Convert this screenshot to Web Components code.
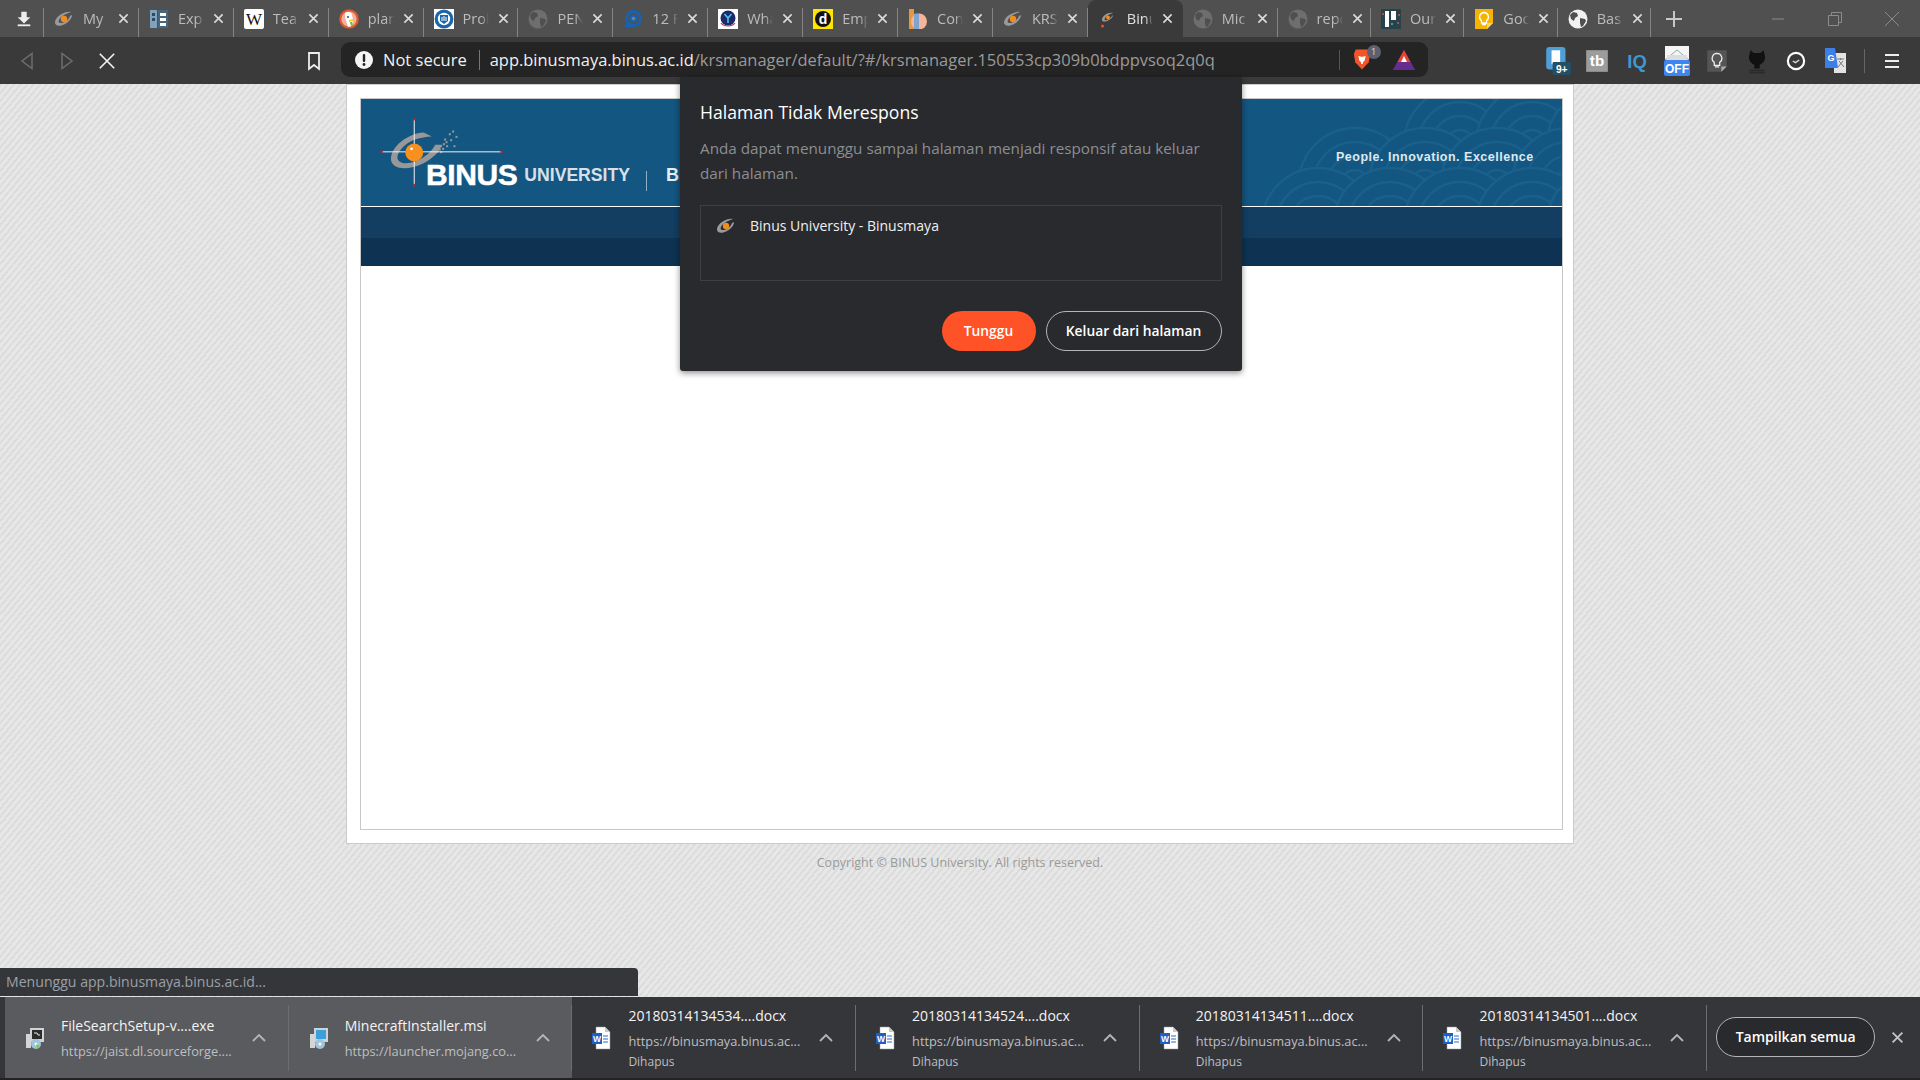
<!DOCTYPE html>
<html lang="id">
<head>
<meta charset="utf-8">
<title>Binus University - Binusmaya</title>
<style>
  html, body { margin: 0; padding: 0; height: 100%; overflow: hidden; }
  body { font-family: "Open Sans", "Liberation Sans", sans-serif; background: #3a3a3a; }
</style>
</head>
<body>
<browser-window>
  <tab-strip>
    <browser-tab><app-icon slot="icon" name="binus"></app-icon>My</browser-tab>
    <browser-tab><app-icon slot="icon" name="columns"></app-icon>Exp</browser-tab>
    <browser-tab><app-icon slot="icon" name="wiki"></app-icon>Tea</browser-tab>
    <browser-tab><app-icon slot="icon" name="duck"></app-icon>plan</browser-tab>
    <browser-tab><app-icon slot="icon" name="shield"></app-icon>Prol</browser-tab>
    <browser-tab><app-icon slot="icon" name="globedim"></app-icon>PEN</browser-tab>
    <browser-tab><app-icon slot="icon" name="bubble"></app-icon>12 F</browser-tab>
    <browser-tab><app-icon slot="icon" name="crest"></app-icon>Wha</browser-tab>
    <browser-tab><app-icon slot="icon" name="dict"></app-icon>Emp</browser-tab>
    <browser-tab><app-icon slot="icon" name="peach"></app-icon>Con</browser-tab>
    <browser-tab><app-icon slot="icon" name="binus"></app-icon>KRS</browser-tab>
    <browser-tab active><app-icon slot="icon" name="loading"></app-icon>Binu</browser-tab>
    <browser-tab><app-icon slot="icon" name="globedim"></app-icon>Mic</browser-tab>
    <browser-tab><app-icon slot="icon" name="globedim"></app-icon>repo</browser-tab>
    <browser-tab><app-icon slot="icon" name="mosaic"></app-icon>Our</browser-tab>
    <browser-tab><app-icon slot="icon" name="keep"></app-icon>Goo</browser-tab>
    <browser-tab><app-icon slot="icon" name="globe"></app-icon>Bas</browser-tab>
  </tab-strip>
  <nav-bar></nav-bar>
  <binus-page></binus-page>
  <download-bar>
    <download-item hover icon="exe">
      <span slot="name">FileSearchSetup-v....exe</span>
      <span slot="url">https://jaist.dl.sourceforge....</span>
    </download-item>
    <download-item hover icon="msi">
      <span slot="name">MinecraftInstaller.msi</span>
      <span slot="url">https://launcher.mojang.co...</span>
    </download-item>
    <download-item icon="word">
      <span slot="name">20180314134534....docx</span>
      <span slot="url">https://binusmaya.binus.ac...</span>
      <span slot="status">Dihapus</span>
    </download-item>
    <download-item icon="word">
      <span slot="name">20180314134524....docx</span>
      <span slot="url">https://binusmaya.binus.ac...</span>
      <span slot="status">Dihapus</span>
    </download-item>
    <download-item icon="word">
      <span slot="name">20180314134511....docx</span>
      <span slot="url">https://binusmaya.binus.ac...</span>
      <span slot="status">Dihapus</span>
    </download-item>
    <download-item icon="word">
      <span slot="name">20180314134501....docx</span>
      <span slot="url">https://binusmaya.binus.ac...</span>
      <span slot="status">Dihapus</span>
    </download-item>
  </download-bar>
  <hang-dialog></hang-dialog>
</browser-window>

<script>
// all the little pictures live here, 20x20 unless the viewBox says otherwise
const GLOBE = (bg, fg) => `<svg viewBox="0 0 20 20"><circle cx="10" cy="10" r="9.5" fill="${bg}"/><path d="M5 3l4 1 1 3-3 2-1 3-3-2-1-4zM12 9l5 1 1 2-3 5-2 1-1-4z" fill="${fg}"/></svg>`;
const ICONS = {
  binus: `<svg viewBox="0 0 20 20"><path d="M17 3C11 2 2 7 1 13c-.6 4 5 5 10 2 4-2 7-6 7-9l-2 1c-1 3-4 6-8 7-3 .5-4-1-3-3 1-3 6-6 12-8z" fill="#9a9a9a"/><circle cx="10" cy="10" r="3.2" fill="#f28c1c"/></svg>`,
  columns: `<svg viewBox="0 0 20 20"><rect x="1" y="1" width="7" height="18" fill="#7fa3bd"/><rect x="9" y="1" width="10" height="18" fill="#46657f"/><rect x="11" y="4" width="6" height="3" fill="#fff"/><rect x="11" y="9" width="6" height="3" fill="#fff"/><rect x="11" y="14" width="6" height="3" fill="#fff"/><rect x="3" y="4" width="3" height="3" fill="#2e4a60"/><rect x="3" y="9" width="3" height="3" fill="#2e4a60"/></svg>`,
  wiki: `<svg viewBox="0 0 20 20"><rect width="20" height="20" rx="2" fill="#fff"/><text x="10" y="15.5" text-anchor="middle" font-family="Liberation Serif" font-size="17" fill="#111">W</text></svg>`,
  duck: `<svg viewBox="0 0 20 20"><circle cx="10" cy="10" r="9.8" fill="#de5833"/><circle cx="10" cy="10" r="7.6" fill="#f4b09a"/><path d="M6 4c3-2 7-1 7 2 1 3 1 8 0 11l-4 1C8 13 5 8 6 4z" fill="#fff"/><circle cx="9" cy="8" r="1" fill="#2d4f8e"/><path d="M10 11l4-1v2l-4 1z" fill="#fdd20a"/><path d="M11 13h2l1 3-2 1z" fill="#65bc46"/></svg>`,
  shield: `<svg viewBox="0 0 20 20"><rect width="20" height="20" fill="#fff"/><circle cx="10" cy="10" r="9.4" fill="#1b66a8"/><circle cx="10" cy="10" r="6.2" fill="#fff"/><path d="M6 6h8v6l-4 3-4-3z" fill="#1b66a8"/><path d="M8 8v4M10 7v5M12 8v4" stroke="#fff" stroke-width="1"/></svg>`,
  globedim: GLOBE('#6e6e6e', '#4f4f4f'),
  globe: GLOBE('#f2f2f2', '#505050'),
  bubble: `<svg viewBox="0 0 20 20"><path d="M10.500 1a8.500 8.500 0 0 1 0 17H1l2.500-4A8.500 8.500 0 0 1 10.500 1z" fill="#1a62ad"/><circle cx="10.500" cy="9.500" r="5.500" fill="#505050"/><circle cx="10.500" cy="9.500" r="4" fill="#1a62ad"/><circle cx="10.500" cy="9.500" r="1.800" fill="#6f8296"/></svg>`,
  crest: `<svg viewBox="0 0 20 20"><rect width="20" height="20" fill="#fff"/><circle cx="10" cy="9" r="7.5" fill="#1b2a6b"/><path d="M6.500 5l3.500 4 3.500-4M10 9v5" stroke="#4cc3e8" stroke-width="1.600" fill="none"/><path d="M3 14c3 4 11 4 14 0" stroke="#b03050" stroke-width="1.200" fill="none"/></svg>`,
  dict: `<svg viewBox="0 0 20 20"><rect width="20" height="20" fill="#ffe600"/><circle cx="10" cy="10" r="8" fill="#111"/><text x="10" y="15" text-anchor="middle" font-family="Liberation Sans" font-weight="700" font-size="14" fill="#fff">d</text></svg>`,
  peach: `<svg viewBox="0 0 20 20"><path d="M1 0h5v20H1z" fill="#e8973a"/><circle cx="11" cy="12.500" r="8" fill="#f5b59a"/><path d="M6 4.800a8 8 0 0 1 5 0v15.200H6z" fill="#7da5cf"/></svg>`,
  loading: `<svg viewBox="0 0 20 20"><path d="M15 4C10 3 4 7 4 11c0 2 4 2 7 0 2-1 4-3 4-5l-1 1c-1 2-3 3-5 4-2 .5-3 0-2-2 1-2 4-4 8-5z" fill="#9a9a9a"/><circle cx="10" cy="8.500" r="2" fill="#f28c1c"/><circle cx="4.500" cy="17" r="1.500" fill="#f04e23"/></svg>`,
  mosaic: `<svg viewBox="0 0 20 20"><rect width="20" height="20" fill="#27424a"/><rect x="4" y="2" width="4" height="16" fill="#fff"/><rect x="10" y="2" width="5" height="9" fill="#fff"/><circle cx="2" cy="5" r="1" fill="#d9534f"/><circle cx="18" cy="6" r="1" fill="#d9534f"/><circle cx="17" cy="14" r="1" fill="#d9534f"/><circle cx="11" cy="15" r="1" fill="#5cb8a5"/></svg>`,
  keep: `<svg viewBox="0 0 20 20"><path d="M1 0h18v14l-6 6H1z" fill="#f4b400"/><path d="M13 20v-6h6z" fill="#f8d66c"/><path d="M10 3.500a4.500 4.500 0 0 0-2.500 8.200V14h5v-2.300A4.500 4.500 0 0 0 10 3.500zM8 15.500h4" stroke="#fff" stroke-width="1.300" fill="none"/></svg>`,
  word: `<svg viewBox="0 0 20 24"><path d="M4 1h9l5 5v17H4z" fill="#fff" stroke="#999" stroke-width=".5"/><path d="M13 1v5h5z" fill="#c8c8c8"/><path d="M11 10h5M11 13h5M11 16h5" stroke="#2b6cc4" stroke-width="1.200"/><rect x="0" y="7" width="10" height="11" fill="#1d5fc4"/><text x="5" y="15.500" text-anchor="middle" font-family="Liberation Sans" font-weight="700" font-size="8.500" fill="#fff">W</text></svg>`,
  exe: `<svg viewBox="0 0 20 24"><rect x="1" y="8" width="5" height="14" fill="#d5d5d5"/><rect x="5" y="2" width="14" height="14" fill="#cfd3d6"/><rect x="7" y="4" width="10" height="9" fill="#2c2c2c"/><path d="M9 7h3l1 2h2" stroke="#eee" fill="none"/><circle cx="11" cy="18" r="5" fill="#9fc4dc"/><circle cx="11" cy="18" r="1.500" fill="#fff"/><path d="M11 18l4 2-3 3z" fill="#8bc34a"/></svg>`,
  msi: `<svg viewBox="0 0 20 24"><rect x="1" y="8" width="5" height="14" fill="#d5d5d5"/><rect x="5" y="2" width="14" height="14" fill="#cfd3d6"/><rect x="7" y="4" width="10" height="9" fill="#3b9fdc"/><circle cx="11" cy="18" r="5" fill="#9fc4dc"/><circle cx="11" cy="18" r="1.500" fill="#fff"/></svg>`,
  back: `<svg viewBox="0 0 20 20"><path d="M15 2.500v15L5 10z" fill="none" stroke="#6e6e6e" stroke-width="1.500"/></svg>`,
  forward: `<svg viewBox="0 0 20 20"><path d="M5 2.500v15L15 10z" fill="none" stroke="#6e6e6e" stroke-width="1.500"/></svg>`,
  stop: `<svg viewBox="0 0 20 20"><path d="M2 2l16 16M18 2L2 18" stroke="#f4f4f4" stroke-width="1.800"/></svg>`,
  bookmark: `<svg viewBox="0 0 20 20"><path d="M5 2h10v16l-5-4-5 4z" fill="none" stroke="#eee" stroke-width="1.800"/></svg>`,
  warn: `<svg viewBox="0 0 20 20"><circle cx="10" cy="10" r="9" fill="#f4f4f4"/><rect x="8.800" y="4" width="2.400" height="8" rx="1" fill="#222"/><circle cx="10" cy="14.500" r="1.400" fill="#222"/></svg>`,
  brave: `<svg viewBox="0 0 20 24"><path d="M3 1h14l2 5-1.500 9L10 23 2.500 15 1 6z" fill="#f1562b"/><path d="M6 8l3 1h2l3-1-1 5-2 2v2H9v-2l-2-2z" fill="#fff"/></svg>`,
  bat: `<svg viewBox="0 0 24 22"><path d="M12 1l11 20H1z" fill="#662d91"/><path d="M12 1l6.500 12h-13z" fill="#e8452c"/><path d="M12 7l4 8H8z" fill="#fff"/><path d="M5.500 13L1 21h22l-4.500-8z" fill="#662d91"/></svg>`,
  pocket: `<svg viewBox="0 0 24 28"><rect x="1" y="1" width="18" height="21" rx="3" fill="#4f9ed8"/><path d="M6 4h8v13H6z" fill="#fff"/><rect x="7" y="15" width="17" height="12" rx="1" fill="#234f67"/><text x="15.500" y="25" text-anchor="middle" font-family="Liberation Sans" font-weight="700" font-size="9.500" fill="#fff">9+</text></svg>`,
  tb: `<svg viewBox="0 0 20 24"><rect y="2" width="20" height="20" fill="#9c9c9c"/><text x="10" y="17" text-anchor="middle" font-family="Liberation Sans" font-weight="700" font-size="14" fill="#fff">tb</text></svg>`,
  iq: `<svg viewBox="0 0 20 24"><text x="10" y="18" text-anchor="middle" font-family="Liberation Sans" font-weight="700" font-size="17" fill="#3f97cf">IQ</text></svg>`,
  off: `<svg viewBox="0 0 26 32"><rect x="1" y="1" width="24" height="14" fill="#f5f5f5"/><path d="M1 15l12-10 12 10" fill="none" stroke="#8aa" stroke-width="1"/><rect x="3" y="10" width="20" height="6" fill="#ddd"/><rect y="15" width="26" height="16" rx="2" fill="#3d85f0"/><text x="13" y="28" text-anchor="middle" font-family="Liberation Sans" font-weight="700" font-size="12" fill="#fff">OFF</text></svg>`,
  bulb: `<svg viewBox="0 0 20 24"><path d="M1 2h18v15l-5 5H1z" fill="#555"/><path d="M10 5a4.500 4.500 0 0 0-2.500 8.200V16h5v-2.800A4.500 4.500 0 0 0 10 5zM8 17.500h4" stroke="#eee" stroke-width="1.200" fill="none"/><path d="M14 22v-5h5z" fill="#aaa"/></svg>`,
  github: `<svg viewBox="0 0 20 24"><path d="M4 2l3 2.500h6L16 2l1.500 6c0 4.500-3 6.500-5 7.500V19h-5v-3.500c-2-1-5-3-5-7.500z" fill="#111"/><rect x="3" y="20" width="14" height="1.500" fill="#2a2a2a"/><rect x="3" y="22" width="14" height="1.500" fill="#2a2a2a"/></svg>`,
  clock: `<svg viewBox="0 0 20 24"><circle cx="10" cy="12" r="7.500" fill="none" stroke="#fff" stroke-width="2"/><path d="M7 12l2.500 1.500L13 11" fill="none" stroke="#ddd" stroke-width="1.200"/></svg>`,
  translate: `<svg viewBox="0 0 24 26"><path d="M10 5h12v20H10z" fill="#e3e3e3"/><path d="M13 11h7M16.500 10v2M14 19l5-6M15 13l5 6" stroke="#777" stroke-width="1"/><path d="M1 0h10l3 20H1z" fill="#3d7fe8"/><text x="7" y="13" text-anchor="middle" font-family="Liberation Sans" font-weight="700" font-size="9" fill="#fff">G</text></svg>`,
  menu: `<svg viewBox="0 0 20 20"><path d="M3 4h14M3 10h14M3 16h14" stroke="#eee" stroke-width="1.800"/></svg>`,
  down: `<svg viewBox="0 0 20 20"><path d="M7 2h6v6h4l-7 7-7-7h4z" fill="#eee"/><rect x="3" y="16" width="14" height="2" fill="#eee"/></svg>`,
  close: `<svg viewBox="0 0 12 12"><path d="M1.500 1.500l9 9M10.500 1.500l-9 9" stroke="currentColor" stroke-width="1.700"/></svg>`,
  chevron: `<svg viewBox="0 0 16 10"><path d="M2 8l6-6 6 6" fill="none" stroke="currentColor" stroke-width="1.800"/></svg>`,
};

class AppIcon extends HTMLElement {
  constructor() {
    super();
    this.attachShadow({ mode: "open" });
  }
  connectedCallback() {
    this.shadowRoot.innerHTML = `
      <style>
        :host { display: inline-flex; width: var(--size, 20px); height: var(--size-h, var(--size, 20px)); flex: none; }
        svg { width: 100%; height: 100%; display: block; }
      </style>
      ${ICONS[this.getAttribute("name")] || ""}`;
  }
}
customElements.define("app-icon", AppIcon);

class BrowserWindow extends HTMLElement {
  constructor() {
    super();
    this.attachShadow({ mode: "open" }).innerHTML = `
      <style>
        :host { display: flex; flex-direction: column; width: 1920px; height: 1080px; position: relative; overflow: hidden; }
      </style>
      <slot></slot>`;
  }
}
customElements.define("browser-window", BrowserWindow);

class TabStrip extends HTMLElement {
  constructor() {
    super();
    this.attachShadow({ mode: "open" }).innerHTML = `
      <style>
        :host { display: flex; height: 37px; background: #505050; flex: none; align-items: stretch; }
        .dl { width: 44px; padding-left: 3px; display: flex; align-items: center; justify-content: center; position: relative; box-sizing: border-box; }
        .dl::after { content: ""; position: absolute; right: 0; top: 8px; bottom: 0; width: 1px; background: #858585; }
        .plus { width: 46px; display: flex; align-items: center; justify-content: center; font-size: 0; }
        .plus svg { width: 16px; height: 16px; }
        .controls { margin-left: auto; display: flex; color: #8c8c8c; }
        .controls div { width: 57px; display: flex; align-items: center; justify-content: center; }
        .controls svg { width: 16px; height: 16px; }
      </style>
      <div class="dl"><app-icon name="down" style="--size:18px"></app-icon></div>
      <slot></slot>
      <div class="plus"><svg viewBox="0 0 16 16"><path d="M8 0v16M0 8h16" stroke="#c8c8c8" stroke-width="2"/></svg></div>
      <div class="controls">
        <div><svg viewBox="0 0 16 16"><path d="M2 8h12" stroke="currentColor"/></svg></div>
        <div><svg viewBox="0 0 16 16"><path d="M1.500 4.500h10v10h-10zM4.500 4V1.500h10v10H12" fill="none" stroke="currentColor"/></svg></div>
        <div><svg viewBox="0 0 16 16"><path d="M1 1l14 14M15 1L1 15" stroke="currentColor"/></svg></div>
      </div>`;
  }
}
customElements.define("tab-strip", TabStrip);

class BrowserTab extends HTMLElement {
  constructor() {
    super();
    this.attachShadow({ mode: "open" }).innerHTML = `
      <style>
        :host { display: flex; align-items: center; width: 94.9px; box-sizing: border-box; padding-left: 10px; position: relative; color: #bcbcbc; font-size: 14.5px; }
        :host(:nth-last-child(-n+4)) { width: 93.4px; }
        :host::after { content: ""; position: absolute; right: 0; top: 8px; bottom: 0; width: 1px; background: #858585; }
        :host([active]) { background: #3a3a3a; border-radius: 8px 8px 0 0; color: #e0e0e0; }
        :host([active])::after { display: none; }
        .title { margin-left: 9px; width: 26px; overflow: hidden; white-space: nowrap; -webkit-mask-image: linear-gradient(to right, #000 70%, transparent); mask-image: linear-gradient(to right, #000 70%, transparent); }
        .x { position: absolute; left: 74px; top: 13px; width: 11px; height: 11px; color: #dcdcdc; }
        .x svg { display: block; }
      </style>
      <slot name="icon"></slot>
      <div class="title"><slot></slot></div>
      <div class="x">${ICONS.close}</div>`;
  }
}
customElements.define("browser-tab", BrowserTab);

class NavBar extends HTMLElement {
  constructor() {
    super();
    const exts = [
      ["pocket", 26, 30], ["tb", 22, 26], ["iq", 22, 26], ["off", 26, 32],
      ["bulb", 22, 26], ["github", 22, 26], ["clock", 22, 26], ["translate", 24, 26],
    ].map(([n, w, h]) => `<div class="ext"><app-icon name="${n}" style="--size:${w}px;--size-h:${h}px"></app-icon></div>`).join("");
    this.attachShadow({ mode: "open" }).innerHTML = `
      <style>
        :host { display: flex; align-items: center; height: 47px; background: #3a3a3a; flex: none; padding-left: 7px; box-sizing: border-box; }
        .btn { width: 40px; display: flex; justify-content: center; }
        .mark { margin-left: 176px; width: 21px; display: flex; justify-content: center; margin-right: 17px; }
        .address { width: 1087px; height: 35px; background: #242424; border-radius: 9px; display: flex; align-items: center; box-sizing: border-box; padding-left: 13px; color: #f1f1f1; margin-top: -2px; white-space: nowrap; }
        .secure { font-size: 16.5px; margin-left: 9px; }
        .bar { width: 1px; height: 20px; background: #777; margin: 0 10px 0 12px; }
        .url { font-size: 16.47px; width: 849px; }
        .url span { color: #9a9a9a; }
        .bar2 { width: 1px; height: 20px; background: #555; }
        .shield { position: relative; margin-left: 13px; width: 30px; display: flex; }
        .badge { position: absolute; left: 14px; top: -3px; width: 14px; height: 14px; border-radius: 50%; background: #5c6070; color: #ddd; font-size: 9px; text-align: center; line-height: 14px; }
        .bat { margin-left: 9px; }
        .exts { margin-left: 111px; display: flex; }
        .ext { width: 39.9px; display: flex; justify-content: center; align-items: center; }
        .ext:first-child { width: 38px; }
        .sep { width: 1px; height: 24px; background: #666; margin-left: 8px; }
        .menu { margin-left: 17px; }
      </style>
      <div class="btn"><app-icon name="back" style="--size:20px"></app-icon></div>
      <div class="btn"><app-icon name="forward" style="--size:20px"></app-icon></div>
      <div class="btn"><app-icon name="stop" style="--size:18px"></app-icon></div>
      <div class="mark"><app-icon name="bookmark"></app-icon></div>
      <div class="address">
        <app-icon name="warn"></app-icon>
        <span class="secure">Not secure</span>
        <i class="bar"></i>
        <div class="url">app.binusmaya.binus.ac.id<span>/krsmanager/default/?#/krsmanager.150553cp309b0bdppvsoq2q0q</span></div>
        <i class="bar2"></i>
        <div class="shield"><app-icon name="brave" style="--size:18px;--size-h:23px"></app-icon><div class="badge">1</div></div>
        <app-icon class="bat" name="bat" style="--size:24px;--size-h:22px"></app-icon>
      </div>
      <div class="exts">${exts}</div>
      <i class="sep"></i>
      <app-icon class="menu" name="menu"></app-icon>`;
  }
}
customElements.define("nav-bar", NavBar);

class BinusBanner extends HTMLElement {
  constructor() {
    super();
    // rows of scallops, drawn from the top row down so each row covers the one before
    const rows = [[144, [1460, 1532, 1603]], [184, [1355, 1425, 1497, 1568]], [224, [1318, 1390, 1460, 1532, 1603]]];
    let scales = "";
    for (const [cy, xs] of rows) {
      for (const cx of xs) {
        scales += [56, 42, 28, 14].map((r) => `<circle cx="${cx - 361}" cy="${cy - 99}" r="${r}"/>`).join("");
      }
    }
    let bits = "";
    [[300,196],[308,190],[316,184],[296,206],[306,204],[318,196],[326,160],[336,152],[330,178],[346,168],[340,196],[312,176],[288,212],[300,214]].forEach(([x, y]) => {
      bits += `<rect x="${x}" y="${y}" width="6" height="6"/>`;
    });
    this.attachShadow({ mode: "open" }).innerHTML = `
      <style>
        :host { display: block; flex: none; }
        .top { height: 107px; background: #135681; position: relative; overflow: hidden; box-sizing: border-box; padding: 59px 0 0 65px; display: flex; align-items: baseline; color: #fff; font-family: "Liberation Sans", sans-serif; font-weight: 700; }
        .pattern { position: absolute; left: 0; top: 0; width: 1200px; height: 107px; fill: #135681; stroke: #19608b; stroke-width: 2.500; }
        .emblem { position: absolute; left: 16px; top: 14px; width: 133px; height: 77px; }
        .binus { font-size: 30px; line-height: 30px; position: relative; top: 2px; letter-spacing: -.4px; -webkit-text-stroke: .5px #fff; }
        .univ { font-size: 17.6px; margin-left: 7px; color: #d7e0e8; position: relative; top: -2px; }
        .rule { width: 1px; height: 20px; background: #8fb0c8; margin-left: 16px; align-self: center; position: relative; top: -1px; }
        .mark { font-size: 18px; margin-left: 19px; color: #e8eef2; position: relative; top: -2px; }
        .tag { position: absolute; left: 975px; top: 51px; font-size: 12.500px; letter-spacing: .5px; color: #dfe8ee; white-space: nowrap; }
        .line { height: 1px; background: #fff; box-shadow: 0 -1px 0 #6f9ab8; }
        .a { height: 31px; background: #133d61; }
        .b { height: 28px; background: #0e3352; }
      </style>
      <div class="top">
        <svg class="pattern" viewBox="0 0 1200 107">${scales}</svg>
        <svg class="emblem" viewBox="110 100 400 230">
          <path d="M275 170L250 158C205 160 150 200 152 240C155 268 200 275 250 250C275 238 300 215 305 195L285 195C270 225 225 255 190 250C165 245 165 225 190 200C210 180 240 172 275 170Z" fill="#989898"/>
          <g fill="#9a9a9a">${bits}</g>
          <path d="M222 118V316M124 216H485" stroke="#f2f2f2" stroke-width="3"/>
          <g fill="#c4202a"><circle cx="222" cy="118" r="4"/><circle cx="222" cy="316" r="4"/><circle cx="124" cy="216" r="4"/><circle cx="485" cy="216" r="4"/></g>
          <circle cx="222" cy="218" r="27" fill="#f7901e"/>
          <circle cx="214" cy="207" r="4" fill="#fff"/>
        </svg>
        <span class="binus">BINUS</span>
        <span class="univ">UNIVERSITY</span>
        <i class="rule"></i>
        <span class="mark">B</span>
        <span class="tag">People. Innovation. Excellence</span>
      </div>
      <div class="line"></div>
      <div class="a"></div>
      <div class="b"></div>`;
  }
}
customElements.define("binus-banner", BinusBanner);

class BinusPage extends HTMLElement {
  constructor() {
    super();
    this.attachShadow({ mode: "open" }).innerHTML = `
      <style>
        :host { display: flex; flex-direction: column; align-items: center; flex: 1; position: relative; min-height: 0;
          background: repeating-linear-gradient(130deg, #dcdcdc 0 2px, #e7e7e7 2px 5px); }
        .box { width: 1228px; height: 760px; box-sizing: border-box; background: #fff; border: 1px solid #cbcbcb; padding: 13px 10px 13px 13px; }
        .frame { height: 100%; box-sizing: border-box; border: 1px solid #c8c8c8; }
        .copy { margin-top: 10px; font-size: 12.5px; color: #9a9a9a; line-height: 18px; }
        .status { position: absolute; left: 0; bottom: 1px; width: 638px; height: 28px; background: #35363a; color: #9aa0a6; font-size: 14.1px; line-height: 28px; padding-left: 6px; box-sizing: border-box; border-top-right-radius: 4px; }
      </style>
      <div class="box"><div class="frame"><binus-banner></binus-banner></div></div>
      <div class="copy">Copyright © BINUS University. All rights reserved.</div>
      <div class="status">Menunggu app.binusmaya.binus.ac.id...</div>`;
  }
}
customElements.define("binus-page", BinusPage);

class HangDialog extends HTMLElement {
  constructor() {
    super();
    this.attachShadow({ mode: "open" }).innerHTML = `
      <style>
        :host { position: absolute; left: 680px; top: 77px; width: 561.5px; height: 294px; box-sizing: border-box; background: #292a2e; padding: 22px 20px 20px; border-radius: 0 0 3px 3px; box-shadow: 0 2px 6px rgba(0,0,0,.45); display: flex; flex-direction: column; }
        h1 { margin: 0; font-size: 17.6px; font-weight: 400; line-height: 26px; color: #fff; }
        p { margin: 11px 0 0; font-size: 15.25px; line-height: 25px; color: #8b8e93; }
        .page { margin-top: 19px; height: 76px; box-sizing: border-box; border: 1px solid #3d3f43; display: flex; align-items: flex-start; padding: 10px 0 0 15px; color: #f0f0f0; font-size: 14px; line-height: 20px; gap: 14px; }
        .actions { margin-top: 29.5px; display: flex; justify-content: flex-end; gap: 10px; }
        button { height: 40px; border-radius: 20px; font: 600 13.8px "Open Sans", sans-serif; color: #fff; cursor: pointer; padding-bottom: 2px; }
        .wait { width: 94px; background: #ff5227; border: 0; }
        .leave { width: 176px; background: transparent; border: 1px solid #b5b5b5; }
      </style>
      <h1>Halaman Tidak Merespons</h1>
      <p>Anda dapat menunggu sampai halaman menjadi responsif atau keluar dari halaman.</p>
      <div class="page"><app-icon name="binus"></app-icon><span>Binus University - Binusmaya</span></div>
      <div class="actions">
        <button class="wait">Tunggu</button>
        <button class="leave">Keluar dari halaman</button>
      </div>`;
  }
}
customElements.define("hang-dialog", HangDialog);

class DownloadBar extends HTMLElement {
  constructor() {
    super();
    this.attachShadow({ mode: "open" }).innerHTML = `
      <style>
        :host { display: flex; flex: none; height: 83px; box-sizing: border-box; background: #35363a; border-bottom: 2px solid #222; padding-left: 5px; align-items: center; }
        .all { margin: -1px 0 1px 9px; width: 159px; height: 40px; box-sizing: border-box; border: 1px solid #b5b5b5; border-radius: 20px; background: #292a2e; color: #fff; font: 600 14px "Open Sans", sans-serif; display: flex; align-items: center; justify-content: center; }
        .x { margin-left: 16px; width: 13px; height: 13px; color: #c4c4c4; }
        .x svg { display: block; }
      </style>
      <slot></slot>
      <div class="all">Tampilkan semua</div>
      <div class="x">${ICONS.close}</div>`;
  }
}
customElements.define("download-bar", DownloadBar);

class DownloadItem extends HTMLElement {
  constructor() {
    super();
    this.attachShadow({ mode: "open" }).innerHTML = `
      <style>
        :host { display: flex; align-items: center; width: 283.700px; height: 100%; box-sizing: border-box; padding-left: 20px; }
        :host([hover]) { background: #5a5b5f; }
        .icon { --size: 20px; --size-h: 24px; margin-right: 16px; }
        .text { width: 189px; display: flex; flex-direction: column; padding-top: 2px; white-space: nowrap; overflow: hidden; }
        .name { font-size: 14px; line-height: 20px; color: #f4f4f4; }
        .url { font-size: 12.8px; line-height: 20px; color: #bdbfc2; margin-top: 5px; }
        .status { font-size: 12px; line-height: 20px; color: #bdbfc2; margin-top: 1px; }
        .chev { width: 16px; height: 10px; color: #b5b5b5; margin-left: 1px; }
        .chev svg { display: block; }
        .sep { width: 1px; height: 66px; background: #6c6d70; margin-left: auto; }
      </style>
      <app-icon class="icon" name="${this.getAttribute("icon")}"></app-icon>
      <div class="text">
        <div class="name"><slot name="name"></slot></div>
        <div class="url"><slot name="url"></slot></div>
        <div class="status" ${this.querySelector('[slot=status]') ? "" : "hidden"}><slot name="status"></slot></div>
      </div>
      <div class="chev">${ICONS.chevron}</div>
      <i class="sep"></i>`;
  }
}
customElements.define("download-item", DownloadItem);
</script>
</body>
</html>
